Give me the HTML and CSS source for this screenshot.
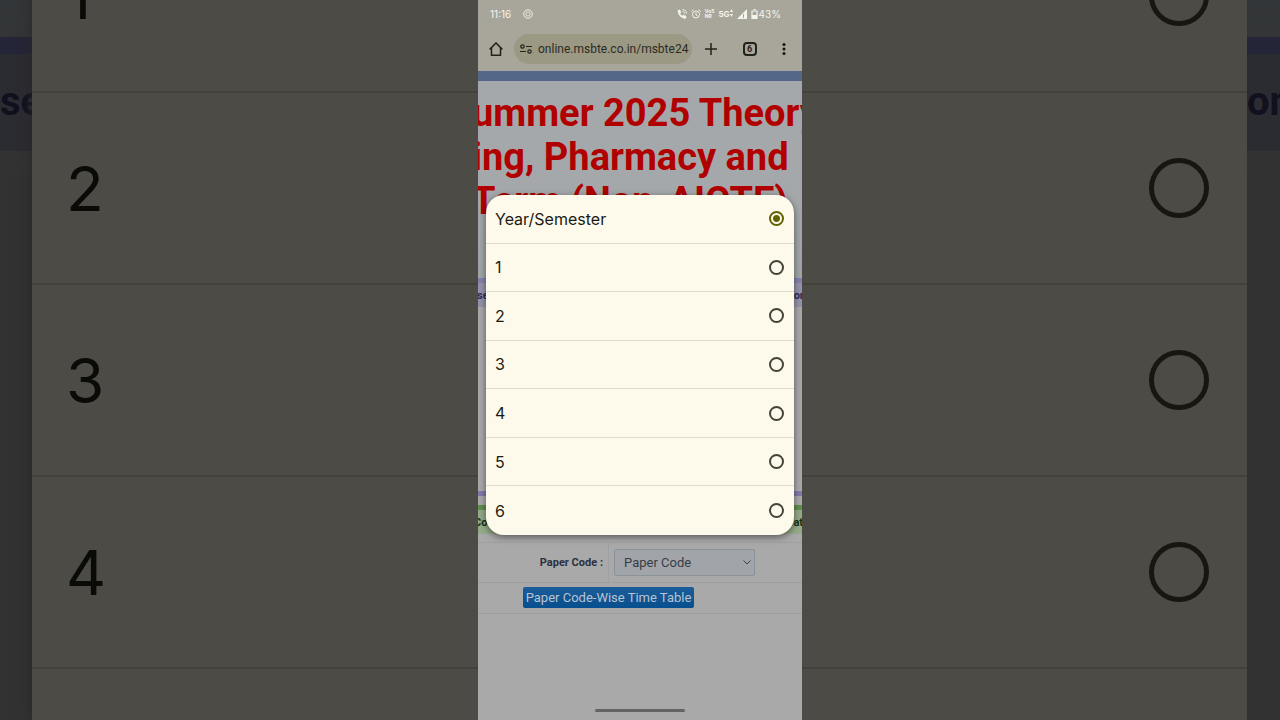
FILE: index.html
```html
<!DOCTYPE html>
<html lang="en">
<head>
  <meta charset="UTF-8">
  <meta name="viewport" content="width=device-width, initial-scale=1.0">
  <title>Summer 2025 Theory - Time Table</title>
  <link rel="stylesheet" href="styles.css">
</head>
<body>

  <div class="stage">
    <!-- Enlarged, darkened copy behind the phone -->
    <div class="backdrop">
      <div class="edge"><div class="edge-head">se</div></div>
      <div class="big-list">
        <label class="big-row"><span>1</span><input type="radio" name="big"></label>
        <label class="big-row"><span>2</span><input type="radio" name="big"></label>
        <label class="big-row"><span>3</span><input type="radio" name="big"></label>
        <label class="big-row"><span>4</span><input type="radio" name="big"></label>
        <div class="big-row"></div>
      </div>
      <div class="edge"><div class="edge-head">on</div></div>
    </div>

    <main class="phone">
      <div class="status">
        <span class="clock">11:16</span>
        <svg width="10" height="10" viewBox="0 0 10 10" fill="none" stroke="#eeeee8"><circle cx="5" cy="5" r="4.3"/><rect x="3" y="3" width="4" height="4" rx="1.5"/></svg>
        <div class="status-icons">
          <svg width="10" height="10" viewBox="0 0 20 20" fill="none" stroke="#f4f4ee"><path d="M3 2h3l2 5-2 2c1 3 3 4 5 5l2-2 5 2v3c0 1-1 2-2 2C8 18 2 11 2 4c0-1 0-2 1-2z" fill="#f4f4ee"/><path d="M11 1c5 0 8 3 8 8M11 5c3 0 4 1 4 4" stroke-width="2"/></svg>
          <svg width="10" height="10" viewBox="0 0 20 20" fill="none" stroke="#f4f4ee" stroke-width="2"><circle cx="10" cy="11" r="7"/><path d="M10 7v5l3 2M1 5l4-4M19 5l-4-4"/></svg>
          <span class="tiny">Vo5<br>NR</span>
          <span class="net">5G<svg width="3" height="8" viewBox="0 0 3 8" fill="#f4f4ee"><path d="M0 3 1.500 0 3 3zM0 5h3L1.500 8z"/></svg></span>
          <svg width="10" height="10" viewBox="0 0 10 10"><path d="M0 10 10 0v10z" fill="#f4f4ee"/><path d="M6.500 5v4" stroke="#a8a69a"/></svg>
          <span class="battery"><svg width="7" height="10" viewBox="0 0 7 10"><path d="M2.500 .5h2M1 2h5v7.300H1z" fill="none" stroke="#f4f4ee" stroke-width="1.200"/><path d="M1 6h5v3H1z" fill="#f4f4ee"/></svg>43%</span>
        </div>
      </div>

      <nav class="toolbar">
        <button type="button" aria-label="Home"><svg width="14" height="14" viewBox="0 0 14 14" fill="none" stroke="#22221a" stroke-width="1.500"><path d="M.7 7.400 7 1l6.300 6.400M2.500 6v7.200h9V6"/></svg></button>
        <div class="address">
          <svg width="12" height="10" viewBox="0 0 12 10" fill="none" stroke="#24241c" stroke-width="1.200"><circle cx="2.500" cy="2.500" r="1.700"/><path d="M6 2.500h6M0 7.500h6"/><circle cx="9.500" cy="7.500" r="1.700"/></svg>
          <input type="text" aria-label="Address" value="online.msbte.co.in/msbte24">
        </div>
        <div class="tools">
          <button type="button" aria-label="New tab"><svg width="12" height="12" viewBox="0 0 12 12" stroke="#22221a" stroke-width="1.500"><path d="M6 0v12M0 6h12"/></svg></button>
          <button type="button" class="tabs" aria-label="Tabs">6</button>
          <button type="button" aria-label="Menu"><svg width="4" height="12" viewBox="0 0 4 12" fill="#15150f"><circle cx="2" cy="1.500" r="1.500"/><circle cx="2" cy="6" r="1.500"/><circle cx="2" cy="10.500" r="1.500"/></svg></button>
        </div>
      </nav>

      <div class="page">
        <h1>ummer 2025 Theory<br>ing, Pharmacy and<br>Term (Non-AICTE)</h1>
        <div class="course">
          <div class="bar purple"><span>se</span><span>on</span></div>
        </div>
        <div class="bar green"><span>Co</span><span>ati</span></div>
        <form class="paper">
          <div class="field">
            <label for="paperCode">Paper Code :</label>
            <div class="cell">
              <select id="paperCode"><option>Paper Code</option></select>
              <svg class="chevron" width="8" height="5" viewBox="0 0 8 5" fill="none" stroke="#3a4048"><path d="M.5 .5 4 4 7.500 .5"/></svg>
            </div>
          </div>
          <div class="action"><button type="button">Paper Code-Wise Time Table</button></div>
        </form>
      </div>
      <div class="home-bar"></div>

      <div class="picker">
        <label><span>Year/Semester</span><input type="radio" name="semester" checked></label>
        <label><span>1</span><input type="radio" name="semester"></label>
        <label><span>2</span><input type="radio" name="semester"></label>
        <label><span>3</span><input type="radio" name="semester"></label>
        <label><span>4</span><input type="radio" name="semester"></label>
        <label><span>5</span><input type="radio" name="semester"></label>
        <label><span>6</span><input type="radio" name="semester"></label>
      </div>
    </main>
  </div>

</body>
</html>
```
FILE: styles.css
```css
* {
  margin: 0;
  padding: 0;
  box-sizing: border-box;
}

body {
  font-family: Roboto, Arial, sans-serif;
  background-color: #333;
  overflow: hidden;
}

button {
  border: none;
  background: none;
  font-family: inherit;
}

.stage {
  display: grid;
  grid-template-rows: 100vh;
}

.backdrop,
.phone {
  grid-area: 1 / 1;
}

/* backdrop */
.backdrop {
  display: flex;
  overflow: hidden;
}

.edge {
  width: 32px;
  padding-top: 37px;
  background: linear-gradient(#333638, #323233 25%, #323232);
  overflow: hidden;
}

.edge-head {
  height: 114px;
  border-top: 17px solid #252538;
  background-color: #2b2b32;
  color: #10101f;
  font-size: 40px;
  font-weight: bold;
  line-height: 96px;
}

.edge:last-child {
  width: 33px;
}

.big-list {
  flex: 1;
  margin-top: -99px;
  box-shadow: 0 0 12px #282828;
}

.big-row {
  display: flex;
  align-items: center;
  justify-content: space-between;
  height: 192px;
  padding: 0 38px 0 34px;
  border-bottom: 2px solid #42413b;
  background-color: #4c4b45;
  color: #0a0a06;
  font-family: Inter, sans-serif;
  font-size: 62px;
}

/* radios */
input[type="radio"] {
  appearance: none;
  width: 15px;
  height: 15px;
  border: 2px solid #45443a;
  border-radius: 50%;
}

.big-row input[type="radio"] {
  width: 60px;
  height: 60px;
  border: 5px solid #17170f;
}

.picker input[type="radio"]:checked {
  border-color: #616200;
  background: radial-gradient(#616200 3px, transparent 4px);
}

/* phone */
.phone {
  position: relative;
  display: flex;
  flex-direction: column;
  justify-self: center;
  width: 324px;
  max-width: 100%;
  background-color: #a8a69a;
  overflow: hidden;
}

.status {
  display: flex;
  align-items: center;
  gap: 12px;
  height: 28px;
  padding: 0 21px 0 12px;
  color: #f4f4ee;
  font-family: Inter, sans-serif;
  font-size: 10px;
}

.status-icons {
  display: flex;
  align-items: center;
  gap: 4px;
  margin-left: auto;
}

.tiny {
  font-size: 5px;
  font-weight: bold;
  line-height: 5px;
}

.net {
  font-size: 8px;
  font-weight: bold;
}

.battery {
  display: flex;
  align-items: center;
  gap: 1px;
}

.toolbar {
  display: flex;
  align-items: center;
  gap: 11px;
  height: 43px;
  padding: 0 16px 2px 11px;
}

.toolbar button {
  display: flex;
}

.address {
  display: flex;
  align-items: center;
  gap: 6px;
  width: 178px;
  height: 30px;
  padding-left: 6px;
  border-radius: 15px;
  background-color: #9b9984;
}

.address input {
  flex: 1;
  min-width: 0;
  border: none;
  background: none;
  color: #2b2b22;
  font-family: Roboto, sans-serif;
  font-size: 12px;
}

.tools {
  display: flex;
  flex: 1;
  align-items: center;
  justify-content: space-between;
  padding-left: 2px;
}

.toolbar .tabs {
  align-items: center;
  justify-content: center;
  width: 14px;
  height: 14px;
  border: 2px solid #22221a;
  border-radius: 4px;
  color: #22221a;
  font-size: 9px;
  font-weight: bold;
}

/* web page */
.page {
  flex: 1;
  border-top: 10px solid #556789;
  background-color: #a9a9a9;
}

h1 {
  height: 197px;
  padding-top: 10px;
  margin-left: -6px;
  background: linear-gradient(#a5a8ab, #a5a8ab 60%, #a2a6a8);
  color: #b00000;
  font-size: 38px;
  line-height: 44px;
  white-space: nowrap;
}

.course {
  height: 218px;
  border-bottom: 5px solid #8379a8;
}

.bar {
  display: flex;
  justify-content: space-between;
  height: 29px;
  margin: 0 -4px;
  font-size: 11px;
  font-weight: bold;
  line-height: 25px;
}

.purple {
  padding-left: 3px;
  border-top: 5px solid #8482ad;
  background-color: #9593ab;
  color: #2c2c55;
}

.green {
  margin-top: 9px;
  border-top: 5px solid #5f8f4f;
  background-color: #94aa88;
  color: #17300f;
}

.paper {
  margin-top: 8px;
  border-top: 1px solid #9f9fa1;
}

.field {
  display: flex;
  align-items: stretch;
  height: 40px;
  border-bottom: 1px solid #9f9fa1;
}

.field label {
  width: 131px;
  padding-right: 5px;
  border-right: 1px solid #a0a1a3;
  color: #2b3142;
  font-size: 11px;
  font-weight: bold;
  line-height: 39px;
  text-align: right;
}

.cell {
  display: flex;
  align-items: center;
  position: relative;
  margin-left: 5px;
}

.field select {
  appearance: none;
  width: 141px;
  height: 27px;
  padding: 0 9px;
  border: 1px solid #8b929a;
  border-radius: 2px;
  background-color: #a1a5a9;
  color: #373d45;
  font-family: Roboto, sans-serif;
  font-size: 13px;
}

.chevron {
  position: absolute;
  right: 4px;
}

.action {
  display: flex;
  height: 31px;
  padding: 4px 0 0 45px;
  border-bottom: 1px solid #9f9fa1;
}

.action button {
  width: 171px;
  height: 21px;
  border-radius: 2px;
  background: linear-gradient(#1c5d99, #074f8f);
  color: #b9c4cf;
  font-size: 13px;
}

.home-bar {
  position: absolute;
  bottom: 8px;
  left: 50%;
  width: 90px;
  height: 3px;
  margin-left: -45px;
  border-radius: 2px;
  background-color: #646464;
}

/* dropdown dialog */
.picker {
  position: absolute;
  top: 195px;
  left: 8px;
  right: 8px;
  display: grid;
  grid-auto-rows: 1fr;
  height: 340px;
  border-radius: 18px;
  background-color: #fdfaeb;
  box-shadow: 0 2px 7px rgba(0, 0, 0, 0.5);
  overflow: hidden;
}

.picker label {
  display: flex;
  align-items: center;
  justify-content: space-between;
  padding: 0 10px 0 9px;
  border-bottom: 1px solid #dfddd0;
  color: #1b1b14;
  font-family: Inter, sans-serif;
  font-size: 16px;
}

.picker label:last-child {
  border-bottom: none;
}
```
